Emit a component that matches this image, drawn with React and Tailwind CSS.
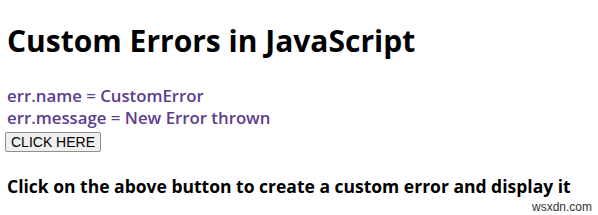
import React from 'react';

export default function App() {
    return (
        <div className="relative w-[598px] h-[215px] bg-white overflow-hidden px-[7px] font-['Open_Sans',sans-serif]">
            <h1 className="pt-[22px] text-[30px] leading-[38px] font-bold text-black">Custom Errors in JavaScript</h1>
            <div className="mt-[25px] text-[16.8px] leading-[22px] font-semibold text-[#5c3d8f]">
                <div>err.name = CustomError</div>
                <div>err.message = New Error thrown</div>
            </div>
            <button className="mt-[1px] -ml-[2px] h-[20px] px-[5px] border border-[#8f8f8f] bg-[#efefef] rounded-[2px] text-[14px] leading-[18px] text-black font-['Liberation_Sans',sans-serif]">
                CLICK HERE
            </button>
            <div className="mt-[22px] text-[17.5px] leading-[22px] font-bold text-black">
                Click on the above button to create a custom error and display it
            </div>
            <div className="absolute right-[6px] bottom-[1px] text-[12px] leading-[14px] text-[#333] font-['Liberation_Sans',sans-serif]">
                wsxdn.com
            </div>
        </div>
    );
}
